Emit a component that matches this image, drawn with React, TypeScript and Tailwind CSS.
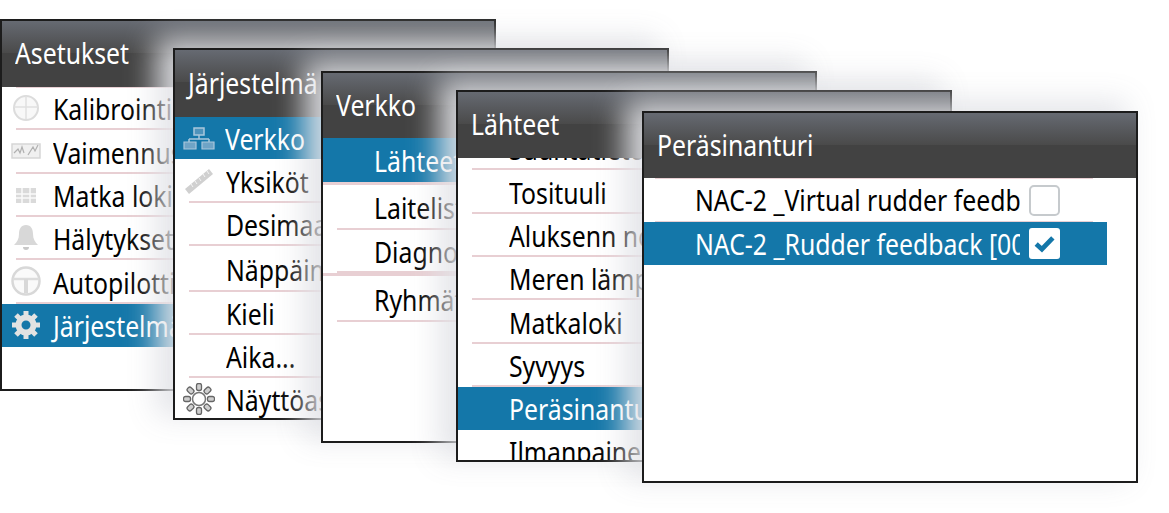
import type { ReactNode } from 'react';

function GreyIcon({ children }: { children: ReactNode }) {
  return (
    <svg viewBox="0 0 32 32" className="w-[32px] h-[32px] shrink-0">
      {children}
    </svg>
  );
}

const CalIcon = (
  <GreyIcon>
    <circle cx="16" cy="16" r="12" fill="#f8f8f8" stroke="#dcdcdc" strokeWidth="2" />
    <path d="M4 15h24M16 4v23" stroke="#e0e0e0" strokeWidth="1.5" />
  </GreyIcon>
);

const DampIcon = (
  <GreyIcon>
    <rect x="2" y="9" width="28" height="14" fill="#f0f0f0" stroke="#d6d6d6" strokeWidth="1.5" />
    <path d="M4 18l4-4 2 4 2-6 2 6M18 20l5-8 2 4 3-6" fill="none" stroke="#b0b0b0" strokeWidth="1.2" />
  </GreyIcon>
);

const LogIcon = (
  <GreyIcon>
    <path d="M6 9h20v15H6z" fill="#dadada" />
    <path d="M6 15h20M6 19h20M12 9v15M20 9v15" stroke="#fafafa" strokeWidth="1.5" />
  </GreyIcon>
);

const BellIcon = (
  <GreyIcon>
    <path d="M16 3c-5 0-7 4-7 9 0 5-2 8-5 11h24c-3-3-5-6-5-11 0-5-2-9-7-9z" fill="#d8d8d8" />
    <path d="M13 25h6c0 2-1 3-3 3s-3-1-3-3z" fill="#c8c8c8" />
  </GreyIcon>
);

const WheelIcon = (
  <GreyIcon>
    <circle cx="16" cy="16" r="13.5" fill="#fafafa" stroke="#d8d8d8" strokeWidth="2.5" />
    <path d="M3 14h26" stroke="#dcdcdc" strokeWidth="2.5" />
    <path d="M16 14v14" stroke="#d8d8d8" strokeWidth="4" />
  </GreyIcon>
);

const GearIcon = (
  <GreyIcon>
    <circle cx="16" cy="16" r="7.5" fill="none" stroke="#e2e2e2" strokeWidth="6" />
    <path
      d="M16 2v6M16 24v6M2 16h6M24 16h6M6 6l4 4M22 22l4 4M26 6l-4 4M10 22l-4 4"
      stroke="#e2e2e2"
      strokeWidth="5"
    />
  </GreyIcon>
);

const NetIcon = (
  <GreyIcon>
    <rect x="11" y="6" width="10" height="7" fill="#4f93bb" stroke="#a9c7dc" strokeWidth="1.5" />
    <path d="M16 13v4M6 17h20M6 17v3M26 17v3" stroke="#a9c7dc" strokeWidth="1.5" fill="none" />
    <path d="M1 20h12v7H1zM19 20h12v7H19z" fill="#6fa4c6" stroke="#a9c7dc" strokeWidth="1.2" />
  </GreyIcon>
);

const RulerIcon = (
  <GreyIcon>
    <path d="M2 25L26 5l4 5-24 20z" fill="#d0d0d0" />
    <path d="M8 20l2 3M12 17l2 3M16 14l2 3M20 10l2 3M24 7l2 3" stroke="#f4f4f4" strokeWidth="1" />
  </GreyIcon>
);

const SunIcon = (
  <GreyIcon>
    <circle cx="16" cy="16" r="6.5" fill="#fff" stroke="#777" strokeWidth="1.5" />
    <g fill="#cfcfcf" stroke="#666" strokeWidth="1.3">
      <rect x="13.5" y="0.5" width="5" height="7" rx="2" />
      <rect x="13.5" y="24.5" width="5" height="7" rx="2" />
      <rect x="0.5" y="13.5" width="7" height="5" rx="2" />
      <rect x="24.5" y="13.5" width="7" height="5" rx="2" />
      <rect x="13.5" y="0.5" width="5" height="7" rx="2" transform="rotate(45 16 16)" />
      <rect x="13.5" y="0.5" width="5" height="7" rx="2" transform="rotate(135 16 16)" />
      <rect x="13.5" y="0.5" width="5" height="7" rx="2" transform="rotate(225 16 16)" />
      <rect x="13.5" y="0.5" width="5" height="7" rx="2" transform="rotate(315 16 16)" />
    </g>
  </GreyIcon>
);

function Row({
  label,
  icon,
  active,
  indent,
  h,
}: {
  label: string;
  icon?: ReactNode;
  active?: boolean;
  indent: number;
  h: number;
}) {
  return (
    <div
      className={`relative shrink-0 flex items-center whitespace-nowrap text-[29px] leading-none ${
        active ? 'bg-[#1477a9] text-white' : 'text-black'
      }`}
      style={{ height: h, paddingLeft: indent }}
    >
      {icon && <span className="absolute left-[8px] top-[5px]">{icon}</span>}
      <span className="inline-block scale-x-[0.855] origin-left">{label}</span>
      {!active && <div className="absolute left-[14px] right-0 bottom-0 h-[2px] bg-[#e8cfd3]" />}
    </div>
  );
}

function Win({
  left,
  top,
  title,
  head,
  glow = true,
  children,
}: {
  left: number;
  top: number;
  title: string;
  head: number;
  glow?: boolean;
  children: ReactNode;
}) {
  return (
    <div
      className={`absolute w-[496px] h-[372px] bg-white border-2 border-[#1c1c1c] flex flex-col overflow-hidden ${
        glow ? 'shadow-[-14px_-7px_28px_3px_rgba(226,227,231,0.92)]' : ''
      }`}
      style={{ left, top }}
    >
      <div className="relative shrink-0 flex flex-col" style={{ height: head }}>
        <div className="h-[32px] bg-gradient-to-b from-[#666a72] to-[#4a4a4a]" />
        <div className="flex-1 bg-[#424242]" />
        <div className="absolute inset-0 flex items-center pl-[13px] pb-[3px] text-white text-[29px] leading-none">
          <span className="inline-block scale-x-[0.855] origin-left">{title}</span>
        </div>
      </div>
      {children}
    </div>
  );
}

export default function App() {
  return (
    <div className="relative w-[1169px] h-[513px] bg-white overflow-hidden font-['Noto_Sans','Open_Sans',sans-serif]">
      <Win left={0} top={19} title="Asetukset" head={66} glow={false}>
        <div className="relative h-0">
          <div className="absolute left-[14px] right-0 top-0 h-[1px] bg-[#e8cfd3]" />
        </div>
        <Row label="Kalibrointi" icon={CalIcon} indent={51} h={43} />
        <Row label="Vaimennus" icon={DampIcon} indent={51} h={44} />
        <Row label="Matka loki" icon={LogIcon} indent={51} h={43} />
        <Row label="Hälytykset" icon={BellIcon} indent={51} h={43} />
        <Row label="Autopilotti" icon={WheelIcon} indent={51} h={44} />
        <Row label="Järjestelmä" icon={GearIcon} indent={51} h={43} active />
      </Win>

      <Win left={173} top={48} title="Järjestelmä" head={67}>
        <Row label="Verkko" icon={NetIcon} indent={50} h={42} active />
        <Row label="Yksiköt" icon={RulerIcon} indent={51} h={44} />
        <Row label="Desimaalit" indent={51} h={43} />
        <Row label="Näppäimet" indent={51} h={46} />
        <Row label="Kieli" indent={51} h={43} />
        <Row label="Aika..." indent={51} h={43} />
        <Row label="Näyttöasetukset" icon={SunIcon} indent={51} h={43} />
      </Win>

      <Win left={321} top={71} title="Verkko" head={65}>
        <Row label="Lähteet" indent={51} h={44} active />
        <div className="h-[3px] shrink-0 bg-[#e8cfd3]" />
        <Row label="Laitelista" indent={51} h={45} />
        <Row label="Diagnostiikka" indent={51} h={43} />
        <div className="h-[3px] shrink-0 bg-[#e8cfd3]" />
        <Row label="Ryhmät" indent={51} h={46} />
      </Win>

      <Win left={456} top={90} title="Lähteet" head={66}>
        <div className="relative h-[12px] shrink-0">
          <div className="relative h-[2px] overflow-hidden">
            <div className="absolute left-[51px] bottom-[-3px] text-[29px] leading-none whitespace-nowrap scale-x-[0.855] origin-left">
              Suuntatieto
            </div>
          </div>
          <div className="absolute left-[14px] right-0 bottom-0 h-[2px] bg-[#e8cfd3]" />
        </div>
        <Row label="Tosituuli" indent={51} h={44} />
        <Row label="Aluksenn nopeus" indent={51} h={43} />
        <Row label="Meren lämpötila" indent={51} h={43} />
        <Row label="Matkaloki" indent={51} h={44} />
        <Row label="Syvyys" indent={51} h={43} />
        <Row label="Peräsinanturi" indent={51} h={43} active />
        <Row label="Ilmanpaine" indent={51} h={43} />
      </Win>

      <Win left={642} top={111} title="Peräsinanturi" head={65}>
        <div className="relative">
          <div className="absolute left-[11px] w-[438px] top-0 h-[1px] bg-[#e8cfd3]" />
          <div className="absolute left-[11px] w-[438px] top-[43px] h-[1px] bg-[#e8cfd3]" />
          <div className="relative h-[44px] flex items-center pl-[51px] w-[463px] text-[29px] leading-[40px]">
            <span className="w-[325px] overflow-hidden whitespace-nowrap">
              <span className="inline-block scale-x-[0.855] origin-left">NAC-2 _Virtual rudder feedback</span>
            </span>
            <span className="absolute left-[385px] top-[7px] w-[31px] h-[31px] bg-white border-2 border-[#c6cacd] rounded-[5px]" />
          </div>
          <div className="relative h-[43px] flex items-center pl-[51px] w-[463px] bg-[#1477a9] text-white text-[29px] leading-[40px]">
            <span className="w-[325px] overflow-hidden whitespace-nowrap">
              <span className="inline-block scale-x-[0.855] origin-left">NAC-2 _Rudder feedback [0000]</span>
            </span>
            <span className="absolute left-[385px] top-[6px] w-[31px] h-[31px] bg-white rounded-[3px] flex items-center justify-center">
              <svg viewBox="0 0 24 24" className="w-[25px] h-[25px]">
                <path d="M4 12.5l5.5 5L20 6.5" fill="none" stroke="#1477a9" strokeWidth="4.5" />
              </svg>
            </span>
          </div>
        </div>
      </Win>
    </div>
  );
}
